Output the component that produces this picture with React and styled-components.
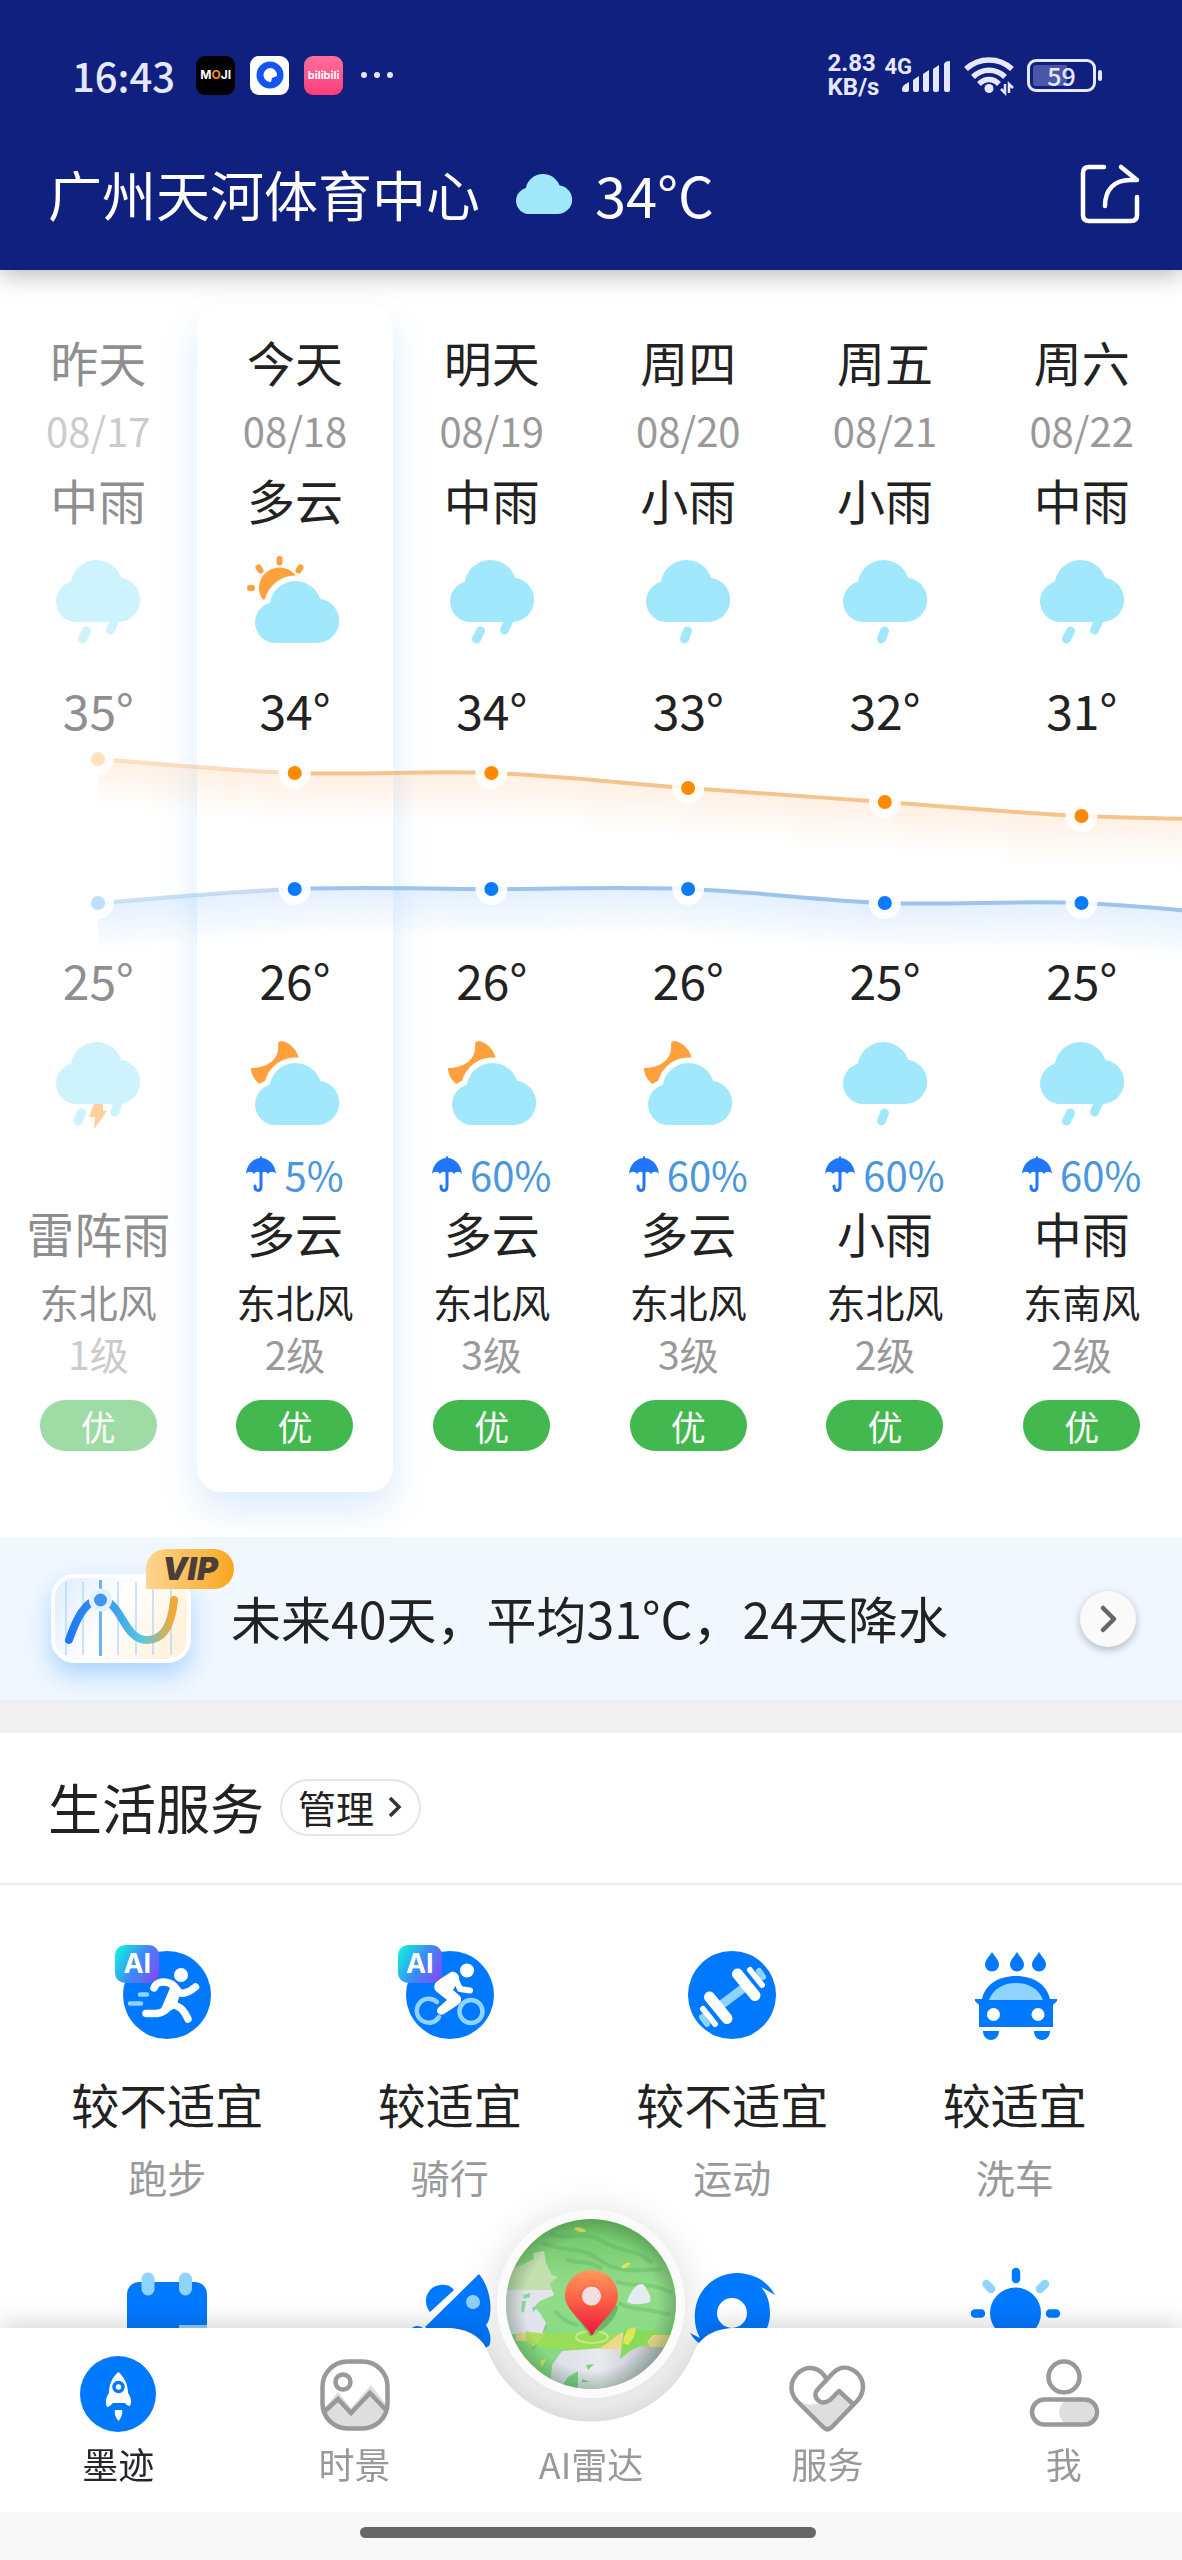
import React from "react";
import styled, { createGlobalStyle } from "styled-components";

const GlobalStyle = createGlobalStyle`
  *, *::before, *::after { box-sizing: border-box; }
  body {
    margin: 0;
    background: #fff;
    color: #222;
    font-family: "Noto Sans CJK SC", "Noto Sans", sans-serif;
  }
  h1, h2, p, ul { margin: 0; padding: 0; font-weight: 400; }
  ul { list-style: none; }
  button { margin: 0; padding: 0; border: 0; background: none; color: inherit; font: inherit; cursor: pointer; }
  svg { display: block; flex: none; overflow: visible; }
`;

const Page = styled.div`
  min-height: 100vh;
  overflow: hidden;
  background: #fff;
`;

/* ---------- header ---------- */

const Header = styled.header`
  position: relative;
  z-index: 2;
  height: 270px;
  padding: 48px 42px 0 48px;
  background: #10207e;
  color: #fff;
  box-shadow: 0 4px 24px rgba(0, 0, 20, 0.3);
`;

const StatusBar = styled.div`
  display: flex;
  align-items: center;
  justify-content: space-between;
  height: 54px;
  padding: 0 38px 0 24px;
  color: #e6e8ff;
`;

const StatusGroup = styled.div`
  display: flex;
  align-items: center;
  gap: ${(p) => p.$gap}px;
`;

const Clock = styled.time`
  margin-right: 6px;
  font-size: 40px;
  line-height: 50px;
  font-weight: 500;
`;

const AppIcon = styled.span`
  display: flex;
  align-items: center;
  justify-content: center;
  width: 39px;
  height: 39px;
  border-radius: 9px;
  background: ${(p) => p.$bg};
  color: #fff;
  font: 700 ${(p) => p.$size || 12}px/1 "Inter", sans-serif;
  overflow: hidden;
`;

const Orange = styled.span`
  color: #f7941d;
`;

const NetSpeed = styled.span`
  display: flex;
  flex-direction: column;
  font: 700 24px/24px "Roboto", sans-serif;
`;

const Signal = styled.span`
  display: flex;
  align-items: flex-start;
`;

const NetType = styled.span`
  margin-right: -11px;
  font: 700 22px/22px "Roboto", sans-serif;
`;

const Battery = styled.span`
  display: flex;
  align-items: center;
  gap: 2px;
  &::after {
    content: "";
    width: 4px;
    height: 11px;
    border-radius: 2px;
    background: #e6e8ff;
  }
`;

const BatteryBody = styled.span`
  display: flex;
  align-items: center;
  justify-content: center;
  width: 69px;
  height: 33px;
  border: 3px solid #e6e8ff;
  border-radius: 9px;
  background: linear-gradient(90deg, #4a57a8 60%, transparent 60%) content-box;
  padding: 3px;
  font-size: 25px;
  line-height: 24px;
  font-weight: 500;
`;

const TitleBar = styled.div`
  display: flex;
  align-items: center;
  height: 72px;
  margin-top: 56px;
`;

const City = styled.h1`
  font-size: 54px;
  line-height: 72px;
`;

const HeaderTemp = styled.span`
  flex: 1;
  font-size: 56px;
  line-height: 72px;
`;

const HeaderCloud = styled.span`
  margin: 0 23px 0 36px;
`;

/* ---------- forecast ---------- */

const Forecast = styled.section`
  position: relative;
  padding: 34px 0 45px;
`;

const Days = styled.ul`
  display: grid;
  grid-template-columns: repeat(6, 1fr);
  margin-right: 2px;
`;

const Day = styled.li`
  display: flex;
  flex-direction: column;
  align-items: center;
  padding: 27px 0 41px;
  border-radius: 24px;
  white-space: nowrap;
  background: ${(p) => (p.$today ? "#fff" : "transparent")};
  box-shadow: ${(p) => (p.$today ? "0 18px 36px rgba(60, 150, 255, 0.18)" : "none")};
  opacity: ${(p) => (p.$past ? 0.5 : 1)};
`;

const Big = styled.p`
  font-size: 48px;
  line-height: 60px;
`;

const DateText = styled.p`
  margin: 14px 0;
  color: #999;
  font-size: 40px;
  line-height: 50px;
`;

const DayIcon = styled.div`
  margin: 22px 0 32px;
`;

const NightIcon = styled.div`
  margin: 24px 0 20px;
`;

const ChartGap = styled.div`
  height: 210px;
`;

const Rain = styled.p`
  display: flex;
  align-items: center;
  gap: 8px;
  height: 50px;
  color: #4a97dd;
  font-size: 40px;
  line-height: 50px;
`;

const NightText = styled(Big)`
  margin: 3px 0 14px;
`;

const Wind = styled.p`
  font-size: 39px;
  line-height: 50px;
`;

const Level = styled.p`
  margin: 2px 0 22px;
  color: #999;
  font-size: 39px;
  line-height: 50px;
`;

const Quality = styled.span`
  width: 117px;
  border-radius: 26px;
  background: #42b84e;
  color: #fff;
  font-size: 35px;
  line-height: 51px;
  text-align: center;
`;

const ChartLayer = styled.svg`
  position: absolute;
  left: 0;
  top: 470px;
  width: 100%;
  height: 210px;
  pointer-events: none;
`;

/* ---------- banner ---------- */

const Banner = styled.a`
  display: flex;
  align-items: center;
  height: 163px;
  padding: 0 46px 0 51px;
  background: #f0f7ff;
  color: #222;
  text-decoration: none;
`;

const BannerArt = styled.span`
  position: relative;
  border-radius: 24px;
  box-shadow: 0 12px 24px rgba(70, 160, 255, 0.4);
`;

const Vip = styled.span`
  position: absolute;
  left: 95px;
  top: -25px;
  width: 88px;
  border-radius: 20px 20px 20px 0;
  background: linear-gradient(90deg, #ffd591, #f9a71f);
  color: #4a3d3d;
  font: italic 900 32px/40px "Inter", sans-serif;
  text-align: center;
`;

const BannerText = styled.span`
  flex: 1;
  margin: 0 20px 4px 40px;
  font-size: 50px;
  line-height: 72px;
  white-space: nowrap;
`;

const RoundArrow = styled.span`
  display: flex;
  align-items: center;
  justify-content: center;
  width: 56px;
  height: 56px;
  border-radius: 50%;
  background: #fafafa;
  box-shadow: 0 3px 8px rgba(0, 0, 0, 0.25);
`;

/* ---------- services ---------- */

const Services = styled.section`
  border-top: 33px solid #f0f0f0;
`;

const ServicesHead = styled.div`
  display: flex;
  align-items: center;
  gap: 16px;
  height: 152px;
  padding: 0 48px 2px;
  border-bottom: 2px solid #ebebeb;
`;

const SectionTitle = styled.h2`
  font-size: 54px;
  line-height: 72px;
`;

const Manage = styled.button`
  display: flex;
  align-items: center;
  gap: 14px;
  height: 57px;
  padding: 0 18px 0 16px;
  border: 2px solid #e6e6e6;
  border-radius: 29px;
  font-size: 38px;
  line-height: 52px;
`;

const ServiceGrid = styled.ul`
  display: grid;
  grid-template-columns: repeat(4, 1fr);
  row-gap: 72px;
  padding: 66px 26px 150px;
`;

const Service = styled.li`
  display: flex;
  flex-direction: column;
  align-items: center;
`;

const ServiceArt = styled.span`
  position: relative;
`;

const AiTag = styled.span`
  position: absolute;
  left: -8px;
  top: -6px;
  width: 44px;
  border-radius: 10px;
  background: linear-gradient(120deg, #12f0e0 5%, #3c8cf5 50%, #8148f5 95%);
  color: #fff;
  font: 700 27px/38px "Inter", sans-serif;
  text-align: center;
`;

const Advice = styled.p`
  margin-top: 34px;
  font-size: 48px;
  line-height: 60px;
`;

const ServiceName = styled.p`
  margin-top: 18px;
  color: #999;
  font-size: 39px;
  line-height: 50px;
`;

/* ---------- tab bar ---------- */

const Dock = styled.footer`
  position: fixed;
  left: 0;
  right: 0;
  bottom: 0;
  z-index: 3;
`;

const TabBar = styled.nav`
  position: relative;
  height: 184px;
`;

const Halo = styled.span`
  position: absolute;
  left: calc(50% - 94px);
  top: -118px;
  width: 188px;
  height: 188px;
  border-radius: 50%;
  box-shadow: 0 6px 40px 4px rgba(0, 0, 0, 0.12);
`;

const BarShape = styled.div`
  position: absolute;
  inset: 0;
  display: flex;
  filter: drop-shadow(0 -4px 12px rgba(0, 0, 0, 0.17));
`;

const Flat = styled.span`
  flex: 1;
  margin: ${(p) => (p.$left ? "0 -1px 0 0" : "0 0 0 -1px")};
  background: #fff;
`;

const Tabs = styled.ul`
  position: relative;
  display: grid;
  grid-template-columns: repeat(5, 1fr);
`;

const Tab = styled.button`
  display: flex;
  flex-direction: column;
  align-items: center;
  gap: 8px;
  width: 100%;
  padding-top: 28px;
  color: ${(p) => (p.$active ? "#26262e" : "#999")};
  font-size: 36px;
  line-height: 46px;
`;

const TabArt = styled.span`
  position: relative;
  width: 76px;
  height: 76px;
`;

const RadarDisc = styled.span`
  position: absolute;
  left: -56px;
  top: -146px;
  width: 188px;
  height: 188px;
  border: 9px solid #fbfbfb;
  border-radius: 50%;
  overflow: hidden;
  background: #fbfbfb;
`;

const RadarMap = styled.svg`
  border-radius: 50%;
`;

const HomeStrip = styled.div`
  position: relative;
  display: flex;
  justify-content: center;
  height: 48px;
  padding: 15px 6px 0 0;
  background: #f8f8f8;
`;

const HomeBar = styled.span`
  width: 456px;
  height: 11px;
  border-radius: 6px;
  background: #666;
`;

/* ---------- weather drawings ---------- */

const CLOUD = "#a1e8fd";
const SUN = "#ffa03c";

function CloudShape({ stroke }) {
  const s = stroke ? { stroke: "#fff", strokeWidth: 11 } : {};
  return (
    <g fill={stroke ? "#fff" : CLOUD} {...s}>
      <circle cx="46.5" cy="35" r="26" />
      <circle cx="68" cy="48.8" r="22.2" />
      <circle cx="26.5" cy="50.5" r="20.5" />
      <rect x="26" y="45" width="42" height="26" />
    </g>
  );
}

function Drop({ d, width = 9 }) {
  return <path d={d} stroke={CLOUD} strokeWidth={width} strokeLinecap="round" fill="none" />;
}

function WeatherIcon({ kind }) {
  return (
    <svg width="96" height="96" viewBox="0 0 96 96" aria-hidden="true">
      {kind === "sunny" && (
        <g>
          <circle cx="32.5" cy="37" r="20.5" fill={SUN} />
          <g stroke={SUN} strokeWidth="6" strokeLinecap="round">
            <path d="M32.5 8V11.5M11.5 16.5L13.5 19.5M53.5 16.5L51.5 19.5M3 37H5" />
          </g>
        </g>
      )}
      {kind === "night" && (
        <path d="M35 8C44 10 51 18 52 27L30 48L14 52C8 48 4 42 4 35C18 35 33 28 31 11C31 9 33 8 35 8Z" fill={SUN} />
      )}
      {kind === "sunny" || kind === "night" ? (
        <g transform="translate(2 21)">
          <CloudShape stroke />
          <CloudShape />
        </g>
      ) : (
        <CloudShape />
      )}
      {kind === "moderate" && <Drop d="M36.5 80L32.5 88M64.5 70L60.5 79" />}
      {kind === "light" && <Drop d="M47.5 80L44.5 88" />}
      {kind === "thunder" && (
        <g>
          <Drop d="M31.5 80L28 88M68 70L65 79" />
          <path d="M44 71H53V78H57L44 96L45 84H39Z" fill={SUN} />
        </g>
      )}
    </svg>
  );
}

function Umbrella() {
  return (
    <svg width="30" height="37" viewBox="0 0 30 37" aria-hidden="true">
      <path d="M15 0C16 0 16 1 16 2C24 3 29 9 30 18C28 15 24 15 22 18C20 15 17 15 15 18C13 15 10 15 8 18C6 15 2 15 0 18C1 9 6 3 14 2C14 1 14 0 15 0Z" fill="#2176ff" />
      <path d="M15 12V30C15 36 9 36 9 30" fill="none" stroke="#2176ff" strokeWidth="3" strokeLinecap="round" />
    </svg>
  );
}

const HIGHS = [19, 33, 33, 48, 62, 76, 80];
const LOWS = [163, 149, 149, 149, 163, 163, 179];
const dotX = (i) => 98 + i * 196.7;

function curve(values) {
  const pts = values.map((y, i) => [dotX(i), y]);
  let d = `M${pts[0][0]} ${pts[0][1]}`;
  for (let i = 0; i < pts.length - 1; i += 1) {
    const a = pts[Math.max(i - 1, 0)];
    const b = pts[i];
    const c = pts[i + 1];
    const e = pts[Math.min(i + 2, pts.length - 1)];
    d += `C${b[0] + (c[0] - a[0]) / 6} ${b[1] + (c[1] - a[1]) / 6} ${c[0] - (e[0] - b[0]) / 6} ${c[1] - (e[1] - b[1]) / 6} ${c[0]} ${c[1]}`;
  }
  return d;
}

const FADE = Array.from({ length: 24 }, (_, i) => i);

function Series({ id, values, line, dot, glow }) {
  const d = curve(values);
  return (
    <g>
      <linearGradient id={id} gradientUnits="userSpaceOnUse" x1="98" y1="0" x2="310" y2="0">
        <stop offset="0" stopColor={line} stopOpacity="0.5" />
        <stop offset="0.9" stopColor={line} stopOpacity="0.6" />
        <stop offset="1" stopColor={line} />
      </linearGradient>
      {FADE.map((i) => (
        <path key={i} d={d} transform={`translate(0 ${2 + i * 2})`} fill="none" stroke={glow} strokeWidth="2" opacity={0.15 * (1 - i / 24)} />
      ))}
      <path d={d} fill="none" stroke={`url(#${id})`} strokeWidth="4" />
      {values.slice(0, 6).map((y, i) => (
        <g key={i}>
          <circle cx={dotX(i)} cy={y} r="16" fill="#fff" opacity="0.88" />
          <circle cx={dotX(i)} cy={y} r="7" fill={dot} opacity={i === 0 ? 0.25 : 1} />
        </g>
      ))}
    </g>
  );
}

function Chart() {
  return (
    <ChartLayer viewBox="0 0 1182 210" preserveAspectRatio="none" aria-hidden="true">
      <Series id="high" values={HIGHS} line="#f5c48c" dot="#ff8a00" glow="#ffa050" />
      <Series id="low" values={LOWS} line="#9dc4ec" dot="#0a7bff" glow="#4d9dff" />
    </ChartLayer>
  );
}

/* ---------- service drawings ---------- */

const BLUE = "#0079ff";
const PALE = "#8fd3ff";

const Art = ({ children }) => (
  <svg width="88" height="88" viewBox="0 0 88 88" aria-hidden="true">
    {children}
  </svg>
);

const RunArt = () => (
  <Art>
    <circle cx="44" cy="44" r="44" fill={BLUE} />
    <circle cx="58" cy="24" r="7" fill="#fff" />
    <g fill="none" stroke="#fff" strokeWidth="7.5" strokeLinecap="round" strokeLinejoin="round">
      <path d="M31 37C33 31 39 30 46 32C54 34 54 44 61 42C66 41 69 39 72.5 36" />
      <path d="M46 55C42 62 36 63 23 62.5" />
      <path d="M48 53C59 56 61 60 65 68" />
    </g>
    <path d="M42 29L58 40L54 53C51 60 44 62 38 58L47 37Z" fill="#fff" />
    <path d="M17 43.5H24M7 52.5H18" stroke={PALE} strokeWidth="4.5" strokeLinecap="round" />
  </Art>
);

const RideArt = () => (
  <Art>
    <circle cx="44" cy="44" r="44" fill={BLUE} />
    <g fill="none" stroke={PALE} strokeWidth="4.5" strokeLinecap="round">
      <path d="M31 51A12 12 0 1 0 33 66" />
      <circle cx="65" cy="60.5" r="11.5" />
    </g>
    <circle cx="61" cy="19.5" r="7" fill="#fff" />
    <path d="M45 21C50 20 54 24 53 29L47 39L54 45C56 48 55 51 53 53L38 63C33 65 29 61 32 57L41 49L31 41C27 38 28 33 31 30Z" fill="#fff" />
    <path d="M50 29L54 38L64 39.5" fill="none" stroke="#fff" strokeWidth="6" strokeLinecap="round" strokeLinejoin="round" />
  </Art>
);

const GymArt = () => (
  <Art>
    <circle cx="44" cy="44" r="44" fill={BLUE} />
    <path d="M33 54L57 36" stroke={PALE} strokeWidth="9" />
    <path d="M71 20L75 26M14 66L19 73" stroke={PALE} strokeWidth="6" strokeLinecap="round" />
    <g stroke="#fff" strokeLinecap="round">
      <path d="M49.5 23L67 44.5M21.5 46L39 67.5" strokeWidth="11" />
      <path d="M62 19L74 34M15 58L27 73" strokeWidth="6" />
    </g>
  </Art>
);

const WashArt = () => (
  <Art>
    <g fill={BLUE}>
      {[21, 46, 68].map((x) => (
        <path key={x} d={`M${x} 1C${x + 3} 6 ${x + 7} 9 ${x + 7} 14A7 6.5 0 0 1 ${x - 7} 14C${x - 7} 9 ${x - 3} 6 ${x} 1Z`} />
      ))}
      <path d="M8 76V54L4 50V48H11C14 34 27 25 45 25S76 34 79 48H86V50L82 54V76Z" />
      <path d="M12 80H28C28 92 12 92 12 80ZM63 80H79C79 92 63 92 63 80Z" />
    </g>
    <path d="M18 49C22 38 32 32 45 32S68 38 72 49Z" fill={PALE} />
    <circle cx="22.5" cy="63.5" r="6.5" fill="#fff" />
    <circle cx="67" cy="63.5" r="6.5" fill="#fff" />
  </Art>
);

const CalendarArt = () => (
  <Art>
    <rect x="4" y="9" width="80" height="79" rx="12" fill={BLUE} />
    <path d="M56 88V52H84V74Z" fill={PALE} />
    <path d="M25 6V16M62.5 6V16" stroke={PALE} strokeWidth="13" strokeLinecap="round" />
  </Art>
);

const RocketArt = () => (
  <Art>
    <path d="M73 1C82 12 86 28 84 42C83 47 82 50 80 52C84 58 86 66 83 73L60 84L19 54Z" fill={BLUE} />
    <path d="M24 39C16 30 20 14 34 12C40 11 45 13 48 17Z" fill={BLUE} />
    <path d="M3 60C5 53 12 51 17 55L8 68Z" fill={BLUE} />
    <circle cx="67" cy="29" r="7" fill={PALE} />
  </Art>
);

const TyphoonArt = () => (
  <Art>
    <path fillRule="evenodd" fill={BLUE} d="M50 0C68 1 80 9 87 22L73 14C80 22 82 30 82 42C81 62 65 78 44 80C28 81 10 74 2 60L12 65C8 58 6 49 7 39C9 16 27 0 50 0ZM44 25A15 15 0 1 0 44 55A15 15 0 1 0 44 25Z" />
  </Art>
);

const SunArt = () => (
  <Art>
    <circle cx="44.5" cy="40" r="25.5" fill={BLUE} />
    <g strokeWidth="8.5" strokeLinecap="round">
      <path d="M45 -1V6M4 40.5H10M79 40.5H85" stroke={BLUE} />
      <path d="M15.5 11L20 16M74 11L69 16" stroke={PALE} />
    </g>
  </Art>
);

/* ---------- tab drawings ---------- */

const TabSvg = ({ children }) => (
  <svg width="76" height="76" viewBox="0 0 76 76" aria-hidden="true">
    {children}
  </svg>
);

const HomeArt = () => (
  <TabSvg>
    <circle cx="38" cy="38" r="38" fill={BLUE} />
    <path d="M38.5 16C45 22 48 29 48 37C51 41 52 46 50 50C48 50 46 49 45 47H33C31 49 29 51 27 51C25 46 26 41 29 37C29 29 32 21 38.5 16Z" fill="#fff" />
    <path d="M35 54H42C43 58 41 62 38.5 65C36 62 34 58 35 54Z" fill="#fff" />
    <circle cx="38.5" cy="31" r="4.5" fill="none" stroke={BLUE} strokeWidth="3.5" />
  </TabSvg>
);

const SceneArt = () => (
  <TabSvg>
    <path d="M6 54L21 36L34 52L54 29L70 50C69 66 60 72 48 72H28C15 72 8 66 6 54Z" fill="#dedede" />
    <g fill="none" stroke="#999" strokeWidth="4.5">
      <rect x="5.5" y="5.5" width="65" height="67" rx="25" />
      <circle cx="26" cy="26" r="7.5" />
      <path d="M7 56L21 43L34 57L53 37L69 54" />
    </g>
  </TabSvg>
);

const HeartArt = () => (
  <TabSvg>
    <path d="M8 44C20 52 35 48 45 41L51 36L63 47L42 72C39 74 37 74 35 72Z" fill="#dedede" />
    <g fill="none" stroke="#999" strokeWidth="4.5" strokeLinejoin="round">
      <path d="M38 24C31 10 18 9 9 17C0 26 1 37 8 45L34 71C37 74 40 74 43 71L68 45C76 36 76 25 68 17C60 10 51 10 44 17L29 33C25 37 26 42 30 45C34 48 38 46 41 44L50 35L64 48" />
    </g>
  </TabSvg>
);

const MeArt = () => (
  <TabSvg>
    <path d="M40 45C31 49 31 63 40 68H56C72 68 72 45 56 45Z" fill="#dedede" />
    <g fill="none" stroke="#999" strokeWidth="4.5">
      <circle cx="38" cy="21" r="15.5" />
      <rect x="6" y="43.5" width="65" height="25" rx="12.5" />
    </g>
  </TabSvg>
);

function Radar() {
  return (
    <RadarMap width="170" height="170" viewBox="0 0 170 170" aria-hidden="true">
      <defs>
        <linearGradient id="land" x1="0" y1="0" x2="0" y2="1">
          <stop offset="0" stopColor="#6cc466" />
          <stop offset="0.4" stopColor="#93dc8a" />
          <stop offset="1" stopColor="#80d87c" />
        </linearGradient>
        <linearGradient id="pin" x1="0" y1="0" x2="0" y2="1">
          <stop offset="0" stopColor="#ff9a5c" />
          <stop offset="0.5" stopColor="#fb5a44" />
          <stop offset="1" stopColor="#f0103f" />
        </linearGradient>
        <linearGradient id="water" x1="0" y1="0" x2="1" y2="0">
          <stop offset="0" stopColor="#dcdde6" />
          <stop offset="0.4" stopColor="#e9eaf0" />
          <stop offset="1" stopColor="#a9abb6" />
        </linearGradient>
        <radialGradient id="edge">
          <stop offset="0.78" stopColor="#2f5f38" stopOpacity="0" />
          <stop offset="1" stopColor="#2f5f38" stopOpacity="0.32" />
        </radialGradient>
      </defs>
      <rect width="170" height="170" fill="url(#land)" />
      <g fill="none" stroke="#4aa84e" strokeWidth="4" opacity="0.28">
        <path d="M44 14C60 24 76 10 96 22S132 30 146 44M36 24C60 34 74 26 92 40S130 52 156 50M110 62C124 70 140 60 166 74M112 84C126 92 140 88 164 96M48 92C56 98 60 104 72 106M40 106C30 116 34 124 26 130M60 40C72 46 82 40 96 50" />
      </g>
      <path d="M0 71V52L20 44L28 40L27 34L38 32L40 44L46 56L52 58L44 64L46 71Z" fill="#c3dfae" />
      <path d="M0 71H46L48 76L34 82L28 88L34 94L40 104L36 115H0Z" fill="#e2e3ec" />
      <path d="M10 114H39L34 122L28 127L20 122H10Z" fill="#ecd890" />
      <path d="M17 76L24 74V78L18 80ZM16 82L20 82L18 94L15 92ZM26 88L32 88L27 93Z" fill="#86d89a" />
      <path d="M44 170L46 146L56 132L96 129L170 126V170Z" fill="url(#water)" />
      <path d="M54 170L62 158L72 152L72 170ZM80 146L88 145L82 151ZM76 160L84 163H76Z" fill="#7ad483" />
      <path d="M121 83C124 72 132 62 138 66C142 72 146 78 144 83C136 86 126 86 121 83Z" fill="#e4ecf0" />
      <path d="M20 112C50 118 60 112 84 114S140 112 170 114V126C140 130 120 124 96 128S50 132 20 124Z" fill="#9fdd4a" opacity="0.75" />
      <path d="M92 130C104 124 110 114 122 112L116 130ZM138 116H168L164 128H144Z" fill="#ecd98a" />
      <path d="M118 110L150 112L140 124L124 132L114 140Z" fill="#86db5a" />
      <g fill="#e3e558">
        <path d="M68 9C72 7 78 10 81 12C76 14 70 13 68 9ZM115 49C117 45 121 43 124 44C123 48 119 50 115 49ZM118 118L122 110L130 108L128 118L122 126L117 124ZM34 142L40 140L36 148Z" />
      </g>
      <ellipse cx="86" cy="118" rx="16" ry="6" fill="none" stroke="#c8e88a" strokeWidth="2" />
      <path d="M84 117L66 92L104 80L112 88C110 100 98 112 84 117Z" fill="#1f5f2c" opacity="0.3" />
      <path d="M86 117C80 104 59 92 59 77C59 62 71 51 85.5 51S112 62 112 77C112 92 92 104 86 117Z" fill="url(#pin)" />
      <circle cx="85.5" cy="77" r="10" fill="#f1dfe0" stroke="#fb6a48" />
      <rect width="170" height="170" fill="url(#edge)" />
    </RadarMap>
  );
}

/* ---------- data ---------- */

const DAYS = [
  { name: "昨天", date: "08/17", day: "中雨", icon: "moderate", high: 35, low: 25, nightIcon: "thunder", night: "雷阵雨", wind: "东北风", level: "1级" },
  { name: "今天", date: "08/18", day: "多云", icon: "sunny", high: 34, low: 26, nightIcon: "night", rain: "5%", night: "多云", wind: "东北风", level: "2级" },
  { name: "明天", date: "08/19", day: "中雨", icon: "moderate", high: 34, low: 26, nightIcon: "night", rain: "60%", night: "多云", wind: "东北风", level: "3级" },
  { name: "周四", date: "08/20", day: "小雨", icon: "light", high: 33, low: 26, nightIcon: "night", rain: "60%", night: "多云", wind: "东北风", level: "3级" },
  { name: "周五", date: "08/21", day: "小雨", icon: "light", high: 32, low: 25, nightIcon: "light", rain: "60%", night: "小雨", wind: "东北风", level: "2级" },
  { name: "周六", date: "08/22", day: "中雨", icon: "moderate", high: 31, low: 25, nightIcon: "moderate", rain: "60%", night: "中雨", wind: "东南风", level: "2级" },
];

const SERVICES = [
  { name: "跑步", advice: "较不适宜", Icon: RunArt, ai: true },
  { name: "骑行", advice: "较适宜", Icon: RideArt, ai: true },
  { name: "运动", advice: "较不适宜", Icon: GymArt },
  { name: "洗车", advice: "较适宜", Icon: WashArt },
  { Icon: CalendarArt },
  { Icon: RocketArt },
  { Icon: TyphoonArt },
  { Icon: SunArt },
];

const TABS = [
  { label: "墨迹", Icon: HomeArt, active: true },
  { label: "时景", Icon: SceneArt },
  { label: "AI雷达", radar: true },
  { label: "服务", Icon: HeartArt },
  { label: "我", Icon: MeArt },
];

/* ---------- page ---------- */

function Status() {
  return (
    <StatusBar>
      <StatusGroup $gap={15}>
        <Clock>16:43</Clock>
        <AppIcon $bg="#000" $size={12}>
          M<Orange>O</Orange>JI
        </AppIcon>
        <AppIcon $bg="#fff">
          <svg width="28" height="28" viewBox="0 0 28 28" aria-hidden="true">
            <circle cx="14" cy="14" r="13.5" fill="#1555ee" />
            <path d="M14 7A7 7 0 1 0 15 21L16 17L21 15A7 7 0 0 0 14 7Z" fill="#fff" />
          </svg>
        </AppIcon>
        <AppIcon $bg="linear-gradient(#ff6f9b, #fc3d7c)" $size={11}>
          bilibili
        </AppIcon>
        <svg width="36" height="8" viewBox="0 0 36 8" fill="#e6e8ff" aria-hidden="true">
          <circle cx="6" cy="4" r="3" />
          <circle cx="19" cy="4" r="3" />
          <circle cx="32" cy="4" r="3" />
        </svg>
      </StatusGroup>
      <StatusGroup $gap={13}>
        <StatusGroup $gap={5}>
          <NetSpeed>
            <span>2.83</span>
            <span>KB/s</span>
          </NetSpeed>
          <Signal>
            <NetType>4G</NetType>
            <svg width="50" height="38" viewBox="0 0 50 38" fill="#e6e8ff" aria-hidden="true">
              <path d="M1 34C1 29 5 28 8 26V34Q8 36 6 36H3Q1 36 1 34ZM12 24L18 20V34Q18 36 16 36H14Q12 36 12 34ZM22 18L28 14V34Q28 36 26 36H24Q22 36 22 34ZM32 13L38 9V34Q38 36 36 36H34Q32 36 32 34ZM43 9Q43 5 49 5V34Q49 36 47 36H45Q43 36 43 34Z" />
            </svg>
          </Signal>
        </StatusGroup>
        <svg width="50" height="38" viewBox="0 0 50 38" aria-hidden="true">
          <g fill="none" stroke="#e6e8ff" strokeWidth="5.5">
            <path d="M2 13C15 1 35 1 48 13" />
            <path d="M9 21C18 12 32 12 41 21" />
            <path d="M15 28C21 22 29 22 35 28" />
          </g>
          <circle cx="25" cy="32.5" r="4.5" fill="#e6e8ff" />
          <path d="M41 28V37L37 33M45 37V28L49 32" fill="none" stroke="#e6e8ff" strokeWidth="2.5" />
        </svg>
        <Battery>
          <BatteryBody>59</BatteryBody>
        </Battery>
      </StatusGroup>
    </StatusBar>
  );
}

export default function App() {
  return (
    <Page>
      <GlobalStyle />
      <Header>
        <Status />
        <TitleBar>
          <City>广州天河体育中心</City>
          <HeaderCloud>
            <svg width="56" height="40" viewBox="6 9 84 62" preserveAspectRatio="none" aria-hidden="true">
              <CloudShape />
            </svg>
          </HeaderCloud>
          <HeaderTemp>34°C</HeaderTemp>
          <button type="button" aria-label="分享">
            <svg width="60" height="60" viewBox="0 0 60 60" fill="none" stroke="#fff" strokeWidth="4.5" strokeLinecap="round" strokeLinejoin="round" aria-hidden="true">
              <path d="M24 3H9Q3 3 3 9V51Q3 57 9 57H51Q57 57 57 51V33" />
              <path d="M25 42C25 26 34 16 50 16H57L41 3" />
            </svg>
          </button>
        </TitleBar>
      </Header>

      <Forecast>
        <Days>
          {DAYS.map((d, i) => (
            <Day key={d.date} $past={i === 0} $today={i === 1}>
              <Big>{d.name}</Big>
              <DateText>{d.date}</DateText>
              <Big>{d.day}</Big>
              <DayIcon>
                <WeatherIcon kind={d.icon} />
              </DayIcon>
              <Big>{d.high}°</Big>
              <ChartGap />
              <Big>{d.low}°</Big>
              <NightIcon>
                <WeatherIcon kind={d.nightIcon} />
              </NightIcon>
              <Rain>
                {d.rain && <Umbrella />}
                {d.rain}
              </Rain>
              <NightText>{d.night}</NightText>
              <Wind>{d.wind}</Wind>
              <Level>{d.level}</Level>
              <Quality>优</Quality>
            </Day>
          ))}
        </Days>
        <Chart />
      </Forecast>

      <Banner href="#forecast">
        <BannerArt>
          <svg width="140" height="89" viewBox="0 0 140 89" aria-hidden="true">
            <defs>
              <linearGradient id="tile" x1="0" y1="0" x2="1" y2="0.4">
                <stop offset="0" stopColor="#dcecff" />
                <stop offset="0.55" stopColor="#fff" />
                <stop offset="1" stopColor="#fff3df" />
              </linearGradient>
              <linearGradient id="wave" x1="0" y1="0" x2="1" y2="0">
                <stop offset="0" stopColor="#2277f2" />
                <stop offset="0.45" stopColor="#3fa4ee" />
                <stop offset="0.7" stopColor="#5cc8dc" />
                <stop offset="1" stopColor="#f7a832" />
              </linearGradient>
            </defs>
            <rect x="2" y="2" width="136" height="85" rx="22" fill="url(#tile)" stroke="#fff" strokeWidth="4" />
            <path d="M15 8V81M32 8V81M67 8V81M85 8V81M102 8V81M120 8V81" stroke="#b9d6f7" strokeWidth="2" opacity="0.7" />
            <path d="M49.5 6V82" stroke="#6bb2f5" strokeWidth="3" />
            <path d="M18 66C25 46 34 26 49 26C71 26 72 66 96 66C114 66 121 48 123 26" fill="none" stroke="url(#wave)" strokeWidth="8" strokeLinecap="round" />
            <circle cx="49.5" cy="26" r="9" fill="#3f97ee" stroke="#e4f1ff" strokeWidth="5" />
          </svg>
          <Vip>VIP</Vip>
        </BannerArt>
        <BannerText>未来40天，平均31°C，24天降水</BannerText>
        <RoundArrow>
          <svg width="16" height="26" viewBox="0 0 16 26" fill="none" stroke="#666" strokeWidth="4.5" strokeLinecap="round" strokeLinejoin="round" aria-hidden="true">
            <path d="M3 2L14 13L3 24" />
          </svg>
        </RoundArrow>
      </Banner>

      <Services>
        <ServicesHead>
          <SectionTitle>生活服务</SectionTitle>
          <Manage type="button">
            管理
            <svg width="13" height="20" viewBox="0 0 13 20" fill="none" stroke="#333" strokeWidth="3.5" aria-hidden="true">
              <path d="M2 1L11 10L2 19" />
            </svg>
          </Manage>
        </ServicesHead>
        <ServiceGrid>
          {SERVICES.map(({ name, advice, Icon, ai }, i) => (
            <Service key={i}>
              <ServiceArt>
                <Icon />
                {ai && <AiTag>AI</AiTag>}
              </ServiceArt>
              {advice && <Advice>{advice}</Advice>}
              {name && <ServiceName>{name}</ServiceName>}
            </Service>
          ))}
        </ServiceGrid>
      </Services>

      <Dock>
        <TabBar>
          <Halo />
          <BarShape>
            <Flat $left />
            <svg width="288" height="184" viewBox="0 0 288 184" aria-hidden="true">
              <path d="M0 0C16 0 34 6 41 24A111 111 0 0 0 247 24C254 6 272 0 288 0V184H0Z" fill="#fff" />
            </svg>
            <Flat />
          </BarShape>
          <Tabs>
            {TABS.map(({ label, Icon, active, radar }) => (
              <li key={label}>
                <Tab type="button" $active={active}>
                  <TabArt>
                    {radar ? (
                      <RadarDisc>
                        <Radar />
                      </RadarDisc>
                    ) : (
                      <Icon />
                    )}
                  </TabArt>
                  {label}
                </Tab>
              </li>
            ))}
          </Tabs>
        </TabBar>
        <HomeStrip>
          <HomeBar />
        </HomeStrip>
      </Dock>
    </Page>
  );
}
